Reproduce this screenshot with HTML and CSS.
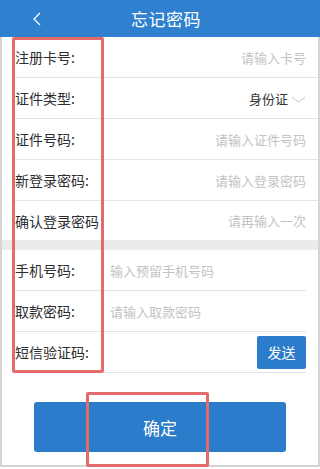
FILE: index.html
```
<!DOCTYPE html>
<html lang="zh-CN">
<head>
  <meta charset="UTF-8" />
  <meta name="viewport" content="width=device-width, initial-scale=1.0" />
  <title>忘记密码</title>
  <link rel="stylesheet" href="styles.css">
</head>
<body>
  <div class="tela">
    <div class="topo">
      <svg class="voltar" width="10" height="14" viewBox="0 0 10 14">
        <polyline points="8,1 2,7 8,13" fill="none" stroke="#ffffff" stroke-width="1.3" />
      </svg>
      <span class="titulo">忘记密码</span>
    </div>

    <div class="moldura">
      <div class="bloco">
        <div class="linha">
          <span class="rotulo">注册卡号:</span>
          <span class="dica">请输入卡号</span>
        </div>
        <div class="linha">
          <span class="rotulo">证件类型:</span>
          <span class="valor">身份证
            <svg class="seta" width="15" height="7" viewBox="0 0 15 7">
              <polyline points="1,1 7.5,6 14,1" fill="none" stroke="#c4c4c4" stroke-width="1" />
            </svg>
          </span>
        </div>
        <div class="linha">
          <span class="rotulo">证件号码:</span>
          <span class="dica">请输入证件号码</span>
        </div>
        <div class="linha">
          <span class="rotulo">新登录密码:</span>
          <span class="dica">请输入登录密码</span>
        </div>
        <div class="linha ultima">
          <span class="rotulo">确认登录密码</span>
          <span class="dica">请再输入一次</span>
        </div>
      </div>

      <div class="faixa"></div>

      <div class="bloco">
        <div class="linha curta">
          <span class="rotulo">手机号码:</span>
          <span class="dica esquerda">输入预留手机号码</span>
        </div>
        <div class="linha curta">
          <span class="rotulo">取款密码:</span>
          <span class="dica esquerda">请输入取款密码</span>
        </div>
        <div class="linha curta">
          <span class="rotulo">短信验证码:</span>
          <button class="enviar">发送</button>
        </div>
      </div>

      <div class="acoes">
        <button class="confirmar">确定</button>
      </div>

      <!-- marcações vermelhas -->
      <div class="marca marca-rotulos"></div>
      <div class="marca marca-botao"></div>
    </div>
  </div>
</body>
</html>
```

FILE: styles.css
```
body {
  margin: 0;
  padding: 0;
  background: #ffffff;
  font-family: "Noto Sans CJK SC", "Noto Sans", sans-serif;
  color: #333;
}

.tela {
  width: 320px;
  height: 469px;
  overflow: hidden;
  position: relative;
}

.topo {
  height: 37px;
  background-color: #2f80cf;
  display: flex;
  align-items: center;
  justify-content: center;
  position: relative;
}

.voltar {
  position: absolute;
  left: 32px;
  top: 12px;
}

.titulo {
  color: #ffffff;
  font-size: 17px;
  letter-spacing: 0.5px;
  margin-left: 12px;
}

.moldura {
  border-left: 2px solid #d4d4d4;
  border-right: 2px solid #d4d4d4;
  border-bottom: 2px solid #d4d4d4;
  height: 430px;
  box-sizing: border-box;
  position: relative;
}

.linha {
  display: flex;
  align-items: center;
  justify-content: space-between;
  height: 40px;
  margin-left: 13px;
  padding-right: 12px;
  border-bottom: 1px solid #e4e4e4;
}

.linha.ultima {
  border-bottom: none;
  height: 39px;
}

.linha.curta {
  margin-right: 12px;
  padding-right: 0;
  justify-content: flex-start;
}

.rotulo {
  font-size: 14px;
  color: #2e2e2e;
  width: 95px;
  flex-shrink: 0;
}

.dica {
  font-size: 13px;
  color: #c3c3c3;
}

.valor {
  font-size: 13px;
  color: #333;
  display: flex;
  align-items: center;
  gap: 3px;
}

.seta {
  margin-top: 3px;
}

.faixa {
  height: 10px;
  background: #ebebeb;
}

.enviar {
  margin-left: auto;
  background-color: #2b7ccb;
  color: #ffffff;
  border: none;
  border-radius: 2px;
  width: 49px;
  height: 33px;
  font-family: inherit;
  font-size: 14px;
  padding: 0;
}

.acoes {
  display: flex;
  justify-content: center;
  margin-top: 29px;
}

.confirmar {
  width: 252px;
  height: 50px;
  background-color: #2b7ccb;
  color: #ffffff;
  border: none;
  border-radius: 3px;
  font-family: inherit;
  font-size: 17px;
  padding: 0;
}

.marca {
  position: absolute;
  border: 3px solid #e46b6b;
  border-radius: 2px;
  box-sizing: border-box;
}

.marca-rotulos {
  left: 10px;
  top: 0;
  width: 92px;
  height: 336px;
}

.marca-botao {
  left: 84px;
  top: 355px;
  width: 123px;
  height: 75px;
}
```
